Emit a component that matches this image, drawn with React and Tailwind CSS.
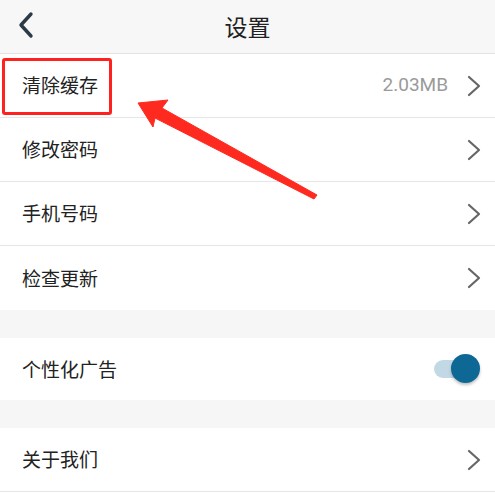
import React, { useState } from "react";

const font = { fontFamily: '"Noto Sans CJK SC", "Noto Sans", sans-serif' };

function Chevron() {
  return (
    <svg width="16" height="22" viewBox="0 0 16 22" className="shrink-0">
      <path d="M3 2 L13 11 L3 20" fill="none" stroke="#666" strokeWidth="2.2" strokeLinecap="round" strokeLinejoin="round" />
    </svg>
  );
}

function Row({ label, value, last }) {
  return (
    <div className={"flex h-[64px] items-center justify-between bg-white pl-[22px] pr-[13px] " + (last ? "" : "border-b border-[#e6e6e6]")}>
      <span className="text-[19px] text-[#222]">{label}</span>
      <div className="flex items-center gap-[18px]">
        {value && <span className="font-['Roboto',sans-serif] text-[19px] text-[#9a9a9a]">{value}</span>}
        <Chevron />
      </div>
    </div>
  );
}

export default function App() {
  const [adsOn, setAdsOn] = useState(true);

  return (
    <div className="relative h-[493px] w-[495px] overflow-hidden bg-white" style={font}>
      {/* header */}
      <div className="relative flex h-[54px] items-center justify-center border-b border-[#e2e2e2] bg-[#f7f7f7]">
        <svg width="20" height="28" viewBox="0 0 20 28" className="absolute left-[16px] top-[11px]">
          <path d="M15 3 L5 14 L15 25" fill="none" stroke="#2c3a46" strokeWidth="3.4" strokeLinecap="round" strokeLinejoin="round" />
        </svg>
        <span className="text-[23px] text-[#222]">设置</span>
      </div>

      <Row label="清除缓存" value="2.03MB" />
      <Row label="修改密码" />
      <Row label="手机号码" />
      <Row label="检查更新" last />

      <div className="h-[28px] bg-[#f6f6f6]" />

      <div className="flex h-[62px] items-center justify-between bg-white pl-[22px] pr-[15px]">
        <span className="text-[19px] text-[#222]">个性化广告</span>
        <button onClick={() => setAdsOn(!adsOn)} className="relative h-[30px] w-[46px]">
          <span className={"absolute left-0 top-[6px] h-[18px] w-[40px] rounded-full " + (adsOn ? "bg-[#c2d9e5]" : "bg-[#d9d9d9]")} />
          <span
            className={
              "absolute top-0 h-[29px] w-[29px] rounded-full shadow-[0_2px_3px_rgba(0,0,0,0.25)] " +
              (adsOn ? "right-0 bg-[#0d6895]" : "left-0 bg-[#f2f2f2]")
            }
          />
        </button>
      </div>

      <div className="h-[28px] bg-[#f6f6f6]" />

      <Row label="关于我们" />

      {/* red highlight box */}
      <div className="absolute left-[2px] top-[58px] h-[57px] w-[110px] rounded-[3px] border-[3px] border-[#ff2020]" />

      {/* red arrow */}
      <svg width="495" height="493" className="pointer-events-none absolute left-0 top-0">
        <polygon
          points="138,103 168,100 162,108 317,195 314,199 155,118 153,127"
          fill="#ff2a1f"
          stroke="#ff2a1f"
          strokeWidth="1"
          strokeLinejoin="round"
        />
      </svg>
    </div>
  );
}
